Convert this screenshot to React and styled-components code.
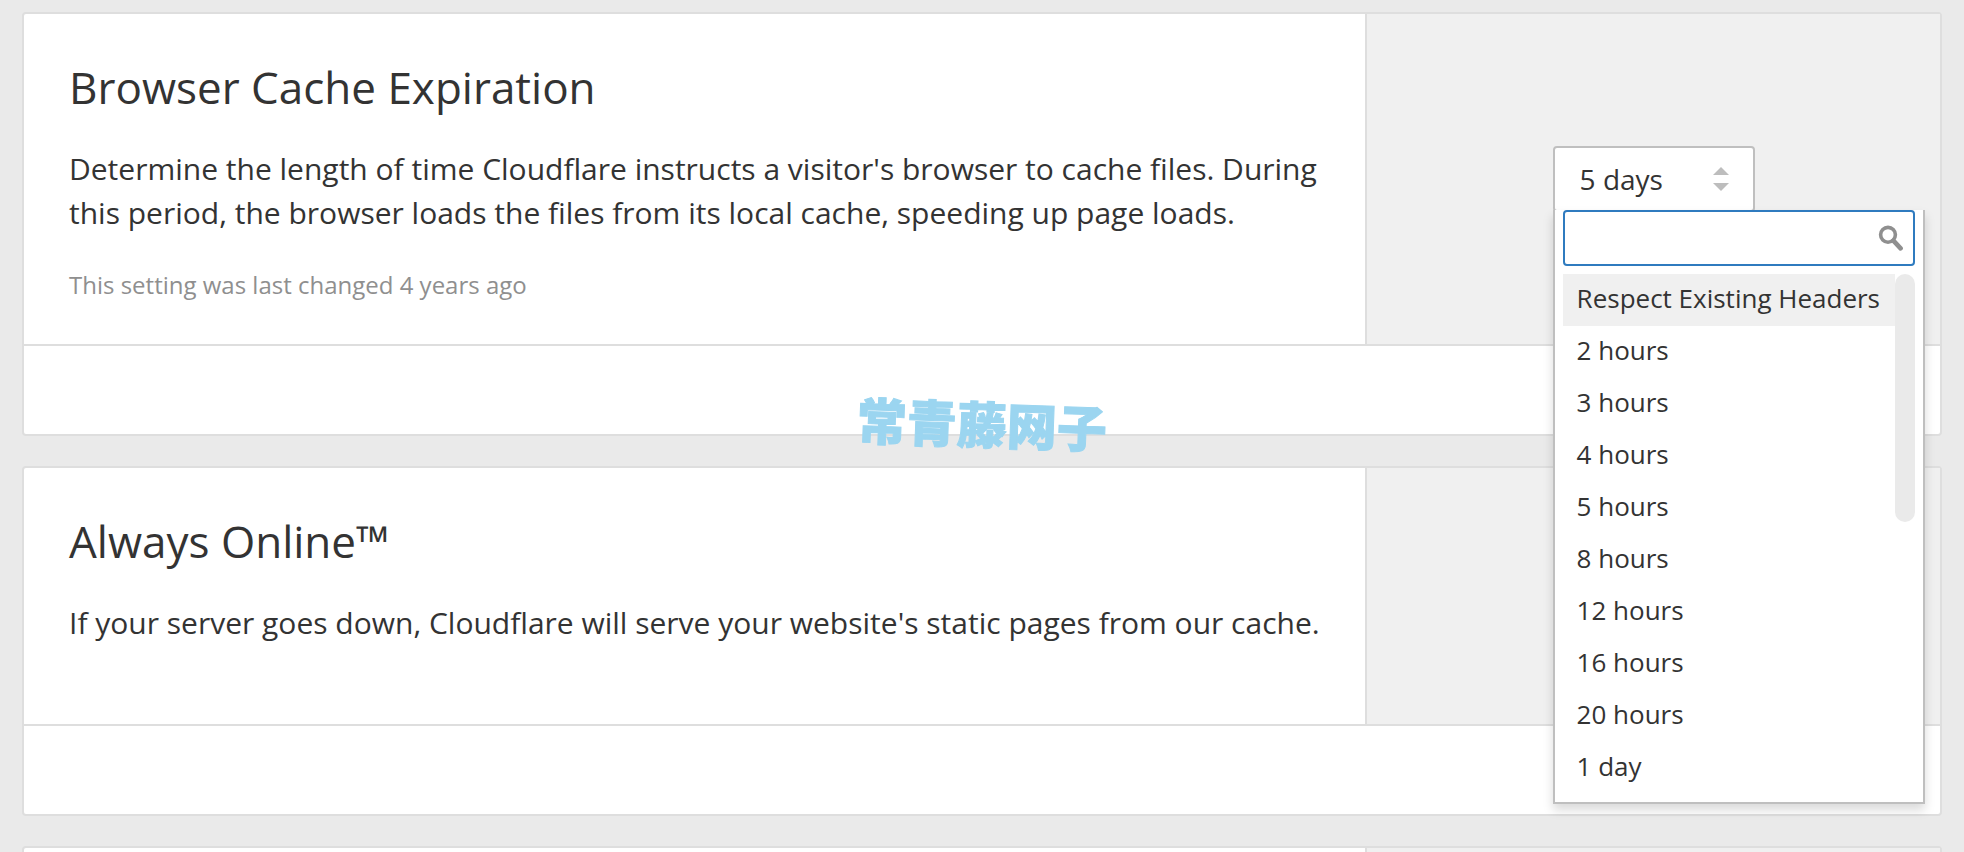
import React from 'react'
import styled, { createGlobalStyle } from 'styled-components'

const expirations = [
  'Respect Existing Headers',
  '2 hours',
  '3 hours',
  '4 hours',
  '5 hours',
  '8 hours',
  '12 hours',
  '16 hours',
  '20 hours',
  '1 day',
]

const SearchIcon = () => (
  <IconSlot width="26" height="26" viewBox="0 0 26 26" fill="none" stroke="#8f8f8f" aria-hidden="true">
    <circle cx="10" cy="9.8" r="7.4" strokeWidth="3.6" />
    <path d="M15.4 15.6 L22.6 23.4" strokeWidth="4.6" strokeLinecap="round" />
  </IconSlot>
)

const SortArrows = () => (
  <Arrows width="16" height="24" viewBox="0 0 16 24" fill="#bdbdbd" aria-hidden="true">
    <path d="M8 0 L16 8 H0 Z" />
    <path d="M8 24 L0 16 H16 Z" />
  </Arrows>
)

const ExpirationPicker = () => (
  <Picker>
    <Select aria-label="Browser cache expiration" defaultValue="5 days">
      {expirations.map((label) => (
        <option key={label}>{label}</option>
      ))}
      <option>5 days</option>
    </Select>
    <SortArrows />
    <Menu>
      <SearchBox>
        <SearchInput type="text" aria-label="Search expirations" />
        <SearchIcon />
      </SearchBox>
      <Scroller>
        <Options role="listbox" aria-label="Expirations">
          {expirations.map((label, i) => (
            <Option key={label} role="option" aria-selected={i === 0} $active={i === 0}>
              {label}
            </Option>
          ))}
        </Options>
        <Track>
          <Thumb />
        </Track>
      </Scroller>
    </Menu>
  </Picker>
)

const SettingCard = ({ title, text, note, control }) => (
  <Card>
    <Row>
      <Info>
        {title && <Title>{title}</Title>}
        {text && <Text>{text}</Text>}
        {note && <Note>{note}</Note>}
      </Info>
      <Control>{control}</Control>
    </Row>
    <Footer />
  </Card>
)

const App = () => {
  return (
    <>
      <GlobalStyle />
      <Page>
        <SettingCard
          title="Browser Cache Expiration"
          text="Determine the length of time Cloudflare instructs a visitor's browser to cache files. During this period, the browser loads the files from its local cache, speeding up page loads."
          note="This setting was last changed 4 years ago"
          control={<ExpirationPicker />}
        />
        <SettingCard
          title="Always Online™"
          text="If your server goes down, Cloudflare will serve your website's static pages from our cache."
        />
        <SettingCard />
      </Page>
      <Watermark>
        <span>常青藤网子</span>
      </Watermark>
    </>
  )
}

export default App

const GlobalStyle = createGlobalStyle`
  * {
    box-sizing: border-box;
  }
  body {
    margin: 0;
    background: #eaeaea;
    color: #333333;
    font-family: 'Open Sans', 'Noto Sans CJK SC', sans-serif;
  }
`

/* the last card is cut off by the bottom of the window */
const Page = styled.main`
  display: flex;
  flex-direction: column;
  gap: 30px;
  height: 100vh;
  padding: 12px 22px 0;
  overflow: hidden;
`

const Card = styled.section`
  flex: none;
  background: #ffffff;
  border: 2px solid #dedede;
  border-radius: 4px;
`

const Row = styled.div`
  display: flex;
  min-height: 256px;
`

const Info = styled.div`
  flex: 1;
  padding: 45px 45px 41px;
`

const Control = styled.div`
  flex: 0 0 30%;
  display: flex;
  align-items: center;
  justify-content: center;
  background: #f0f0f0;
  border-left: 2px solid #dedede;
`

const Footer = styled.div`
  height: 90px;
  border-top: 2px solid #dedede;
`

const Title = styled.h2`
  margin: 0 0 32px;
  font-size: 44px;
  font-weight: 400;
  line-height: 56px;
`

const Text = styled.p`
  margin: 0;
  font-size: 30px;
  line-height: 44px;
`

const Note = styled.p`
  margin: 32px 0 0;
  color: #8f8f8f;
  font-size: 24px;
  line-height: 36px;
`

const Picker = styled.div`
  position: relative;
  display: flex;
  align-items: center;
`

const Select = styled.select`
  appearance: none;
  width: 202px;
  height: 66px;
  padding: 0 60px 0 25px;
  background: #ffffff;
  border: 2px solid #bfbfbf;
  border-radius: 4px;
  color: #333333;
  font-family: inherit;
  font-size: 28px;
`

const Arrows = styled.svg`
  position: absolute;
  right: 26px;
  pointer-events: none;
`

const Menu = styled.div`
  position: absolute;
  top: 64px;
  left: 0;
  z-index: 1;
  width: 372px;
  padding: 0 8px 8px;
  background: #ffffff;
  border: 2px solid #bfbfbf;
  border-top: none;
  box-shadow: 0 6px 10px rgba(0, 0, 0, 0.15);
`

const SearchBox = styled.div`
  position: relative;
  display: flex;
  align-items: center;
`

const SearchInput = styled.input`
  width: 100%;
  height: 56px;
  padding: 0 48px 0 12px;
  background: #ffffff;
  border: 2px solid #2f7bbf;
  border-radius: 4px;
  outline: none;
  font-family: inherit;
  font-size: 26px;
`

const IconSlot = styled.svg`
  position: absolute;
  right: 11px;
`

const Scroller = styled.div`
  display: flex;
  margin-top: 8px;
`

const Options = styled.ul`
  flex: 1;
  margin: 0;
  padding: 0;
  list-style: none;
`

const Option = styled.li`
  padding: 6px 14px 10px;
  background: ${(props) => (props.$active ? '#f0f0f0' : 'transparent')};
  font-size: 26px;
  line-height: 36px;
  white-space: nowrap;
`

const Track = styled.div`
  width: 20px;
`

const Thumb = styled.div`
  height: 248px;
  background: #eaeaea;
  border-radius: 10px;
`

const Watermark = styled.div`
  position: fixed;
  inset: 0;
  z-index: 2;
  display: flex;
  align-items: center;
  justify-content: center;
  padding-bottom: 8px;
  pointer-events: none;

  span {
    color: #9bd5f0;
    font-family: 'Noto Sans CJK SC', sans-serif;
    font-size: 50px;
    font-weight: 900;
    line-height: 1;
    -webkit-text-stroke: 1px #9bd5f0;
    transform: rotate(2deg);
  }
`
